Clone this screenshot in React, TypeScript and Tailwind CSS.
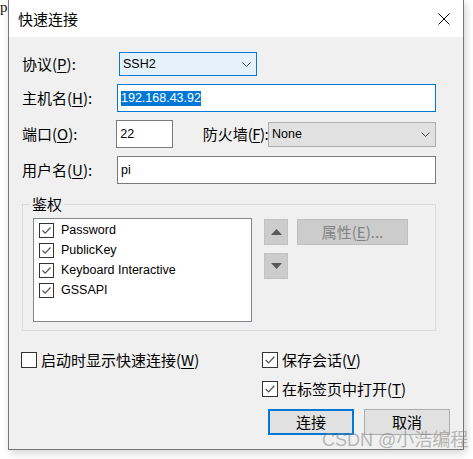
import React from "react";

const cjk = "font-['Noto_Sans_CJK_SC',sans-serif]";
const lat = "font-['Liberation_Sans','Noto_Sans_CJK_SC',sans-serif]";

function Chevron() {
  return (
    <svg width="9" height="5" viewBox="0 0 9 5" className="block">
      <polyline points="0.5,0.5 4.5,4.5 8.5,0.5" fill="none" stroke="#404040" strokeWidth="1" />
    </svg>
  );
}

function CheckBox({ checked, size }: { checked: boolean; size: number }) {
  return (
    <span
      className="shrink-0 border border-[#333333] bg-white flex items-center justify-center"
      style={{ width: size, height: size }}
    >
      {checked && (
        <svg width={size - 2} height={size - 2} viewBox="0 0 13 13" className="block">
          <polyline points="2.5,6.5 5.2,9.2 10.5,3.5" fill="none" stroke="#555555" strokeWidth="1.2" />
        </svg>
      )}
    </span>
  );
}

function Label({ text, k, w }: { text: string; k: string; w?: string }) {
  return (
    <span className={`${cjk} text-[15px] leading-[20px] text-black whitespace-nowrap ${w ?? ""}`}>
      {text}(<u className="underline underline-offset-[2px]">{k}</u>):
    </span>
  );
}

export default function App() {
  const items = ["Password", "PublicKey", "Keyboard Interactive", "GSSAPI"];
  return (
    <div className="w-[473px] h-[459px] bg-white relative overflow-hidden flex">
      <div className="w-[8px] shrink-0">
        <span className="block font-['Liberation_Serif',serif] text-[15px] leading-[14px] text-[#111]">p</span>
      </div>
      <div className="w-[456px] h-[450px] shrink-0 border-x border-b border-[#777777] flex flex-col shadow-[2px_3px_8px_rgba(0,0,0,0.18)]">
        {/* title bar */}
        <div className="h-[37px] bg-white flex items-center justify-between pl-[9px] pr-[13px]">
          <span className={`${cjk} text-[15px] leading-[20px] text-black`}>快速连接</span>
          <svg width="12" height="12" viewBox="0 0 12 12" className="block">
            <line x1="0.5" y1="0.5" x2="11.5" y2="11.5" stroke="#000" strokeWidth="1" />
            <line x1="11.5" y1="0.5" x2="0.5" y2="11.5" stroke="#000" strokeWidth="1" />
          </svg>
        </div>
        {/* body */}
        <div className="flex-1 bg-[#f0f0f0] pt-[15px] pl-[13px] flex flex-col">
          {/* protocol */}
          <div className="h-[24px] flex items-center">
            <Label text="协议" k="P" w="w-[95px]" />
            <div className="ml-[2px] w-[138px] h-[24px] border border-[#0078d7] bg-[#e5f1fb] flex items-center justify-between pl-[3px] pr-[5px]">
              <span className={`${lat} text-[12.5px] leading-[15px] text-black`}>SSH2</span>
              <Chevron />
            </div>
          </div>
          {/* host */}
          <div className="mt-[8px] h-[28px] flex items-center">
            <Label text="主机名" k="H" w="w-[95px]" />
            <div className="w-[319px] h-[28px] border border-[#0078d7] bg-white flex items-center pl-[3px]">
              <span className={`${lat} text-[12.5px] leading-[15px] bg-[#0078d7] text-white`}>192.168.43.92</span>
            </div>
          </div>
          {/* port + firewall */}
          <div className="mt-[8px] w-[414px] h-[28px] flex items-center">
            <Label text="端口" k="O" w="w-[95px]" />
            <div className="w-[57px] h-[28px] border border-[#7a7a7a] bg-white flex items-center pl-[3px]">
              <span className={`${lat} text-[12.5px] leading-[15px] text-black`}>22</span>
            </div>
            <span className={`${cjk} ml-[30px] text-[15px] leading-[20px] text-black whitespace-nowrap`}>
              防火墙<span className="tracking-[-0.6px]">(<u className="underline underline-offset-[2px]">F</u>):</span>
            </span>
            <div className="ml-auto shrink-0 w-[168px] h-[25px] border border-[#adadad] bg-[#e1e1e1] flex items-center justify-between pl-[3px] pr-[5px]">
              <span className={`${lat} text-[12.5px] leading-[15px] text-black`}>None</span>
              <Chevron />
            </div>
          </div>
          {/* user */}
          <div className="mt-[8px] h-[28px] flex items-center">
            <Label text="用户名" k="U" w="w-[95px]" />
            <div className="w-[319px] h-[28px] border border-[#7a7a7a] bg-white flex items-center pl-[3px]">
              <span className={`${lat} text-[12.5px] leading-[15px] text-black`}>pi</span>
            </div>
          </div>
          {/* auth group */}
          <div className="mt-[20px] w-[414px] h-[127px] border border-[#dcdcdc] relative pt-[13px] pl-[10px] flex items-start">
            <span className={`${cjk} absolute -top-[11px] left-[7px] px-[2px] bg-[#f0f0f0] text-[15px] leading-[20px] text-black`}>
              鉴权
            </span>
            <div className="w-[219px] h-[104px] border border-[#828790] bg-white pt-[1px] pl-[5px] flex flex-col">
              {items.map((t) => (
                <div key={t} className="h-[20px] flex items-center">
                  <CheckBox checked size={15} />
                  <span className={`${lat} ml-[7px] text-[12.5px] leading-[15px] text-black whitespace-nowrap`}>{t}</span>
                </div>
              ))}
            </div>
            <div className="ml-[12px] mt-[1px] flex flex-col gap-[8px]">
              <div className="w-[24px] h-[26px] bg-[#cccccc] border border-[#c2c2c2] flex items-center justify-center">
                <svg width="11" height="6" viewBox="0 0 11 6" className="block">
                  <polygon points="5.5,0 11,6 0,6" fill="#595959" />
                </svg>
              </div>
              <div className="w-[24px] h-[26px] bg-[#cccccc] border border-[#c2c2c2] flex items-center justify-center">
                <svg width="11" height="6" viewBox="0 0 11 6" className="block">
                  <polygon points="0,0 11,0 5.5,6" fill="#595959" />
                </svg>
              </div>
            </div>
            <div className="ml-[9px] mt-[1px] w-[111px] h-[26px] bg-[#cccccc] border border-[#bfbfbf] flex items-center justify-center">
              <span className={`${cjk} text-[15px] leading-[20px] text-[#838383]`}>
                属性(<u className="underline underline-offset-[2px]">E</u>)...
              </span>
            </div>
          </div>
          {/* bottom */}
          <div className="mt-[21px] flex">
            <div className="w-[241px] -ml-[1px] h-[16px] flex items-center">
              <CheckBox checked={false} size={16} />
              <span className={`${cjk} ml-[4px] text-[15px] leading-[16px] text-black whitespace-nowrap`}>
                启动时显示快速连接(<u className="underline underline-offset-[2px]">W</u>)
              </span>
            </div>
            <div className="flex flex-col">
              <div className="h-[16px] flex items-center">
                <CheckBox checked size={16} />
                <span className={`${cjk} ml-[4px] text-[15px] leading-[16px] text-black whitespace-nowrap`}>
                  保存会话(<u className="underline underline-offset-[2px]">V</u>)
                </span>
              </div>
              <div className="mt-[13px] h-[16px] flex items-center">
                <CheckBox checked size={16} />
                <span className={`${cjk} ml-[4px] text-[15px] leading-[16px] text-black whitespace-nowrap`}>
                  在标签页中打开(<u className="underline underline-offset-[2px]">T</u>)
                </span>
              </div>
              <div className="mt-[12px] pl-[6px] flex gap-[10px]">
                <div className="w-[86px] h-[26px] border-2 border-[#0078d7] bg-[#e1e1e1] flex items-center justify-center">
                  <span className={`${cjk} text-[15px] leading-[20px] text-black`}>连接</span>
                </div>
                <div className="w-[86px] h-[26px] border border-[#adadad] bg-[#e1e1e1] flex items-center justify-center">
                  <span className={`${cjk} text-[15px] leading-[20px] text-black`}>取消</span>
                </div>
              </div>
            </div>
          </div>
        </div>
      </div>
      {/* watermark */}
      <span className={`${lat} absolute left-[322px] top-[431px] text-[18px] leading-[18px] text-[rgba(130,130,130,0.55)] whitespace-nowrap pointer-events-none`}>
        CSDN @小浩编程
      </span>
    </div>
  );
}
